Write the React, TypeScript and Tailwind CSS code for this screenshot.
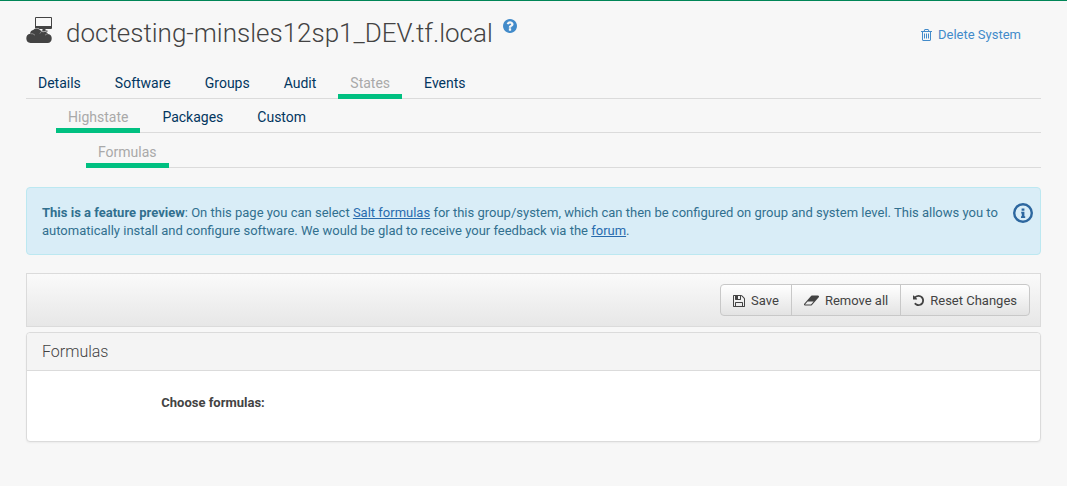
import type { ReactNode } from "react";

const FLOPPY =
  "M512 1536h768v-384h-768v384zm896 0h128v-896q0-14-10-38.5t-20-34.5l-281-281q-10-10-34-20t-39-10v416q0 40-28 68t-68 28h-576q-40 0-68-28t-28-68v-416h-128v1280h128v-416q0-40 28-68t68-28h832q40 0 68 28t28 68v416zm-384-928v-320q0-13-9.5-22.5t-22.5-9.5h-192q-13 0-22.5 9.5t-9.5 22.5v320q0 13 9.5 22.5t22.5 9.5h192q13 0 22.5-9.5t9.5-22.5zm640 32v928q0 40-28 68t-68 28h-1344q-40 0-68-28t-28-68v-1344q0-40 28-68t68-28h928q40 0 88 20t76 48l280 280q28 28 48 76t20 88z";
const ERASER =
  "M960 1408l336-384h-768l-336 384h768zm1013-1077q15 34 9.5 71.5t-30.5 65.5l-896 1024q-38 44-96 44h-768q-38 0-69.5-20.5t-47.5-54.5q-15-34-9.5-71.5t30.5-65.5l896-1024q38-44 96-44h768q38 0 69.5 20.5t47.5 54.5z";
const UNDO =
  "M1664 896q0 156-61 298t-164 245-245 164-298 61q-172 0-327-72.5t-264-204.5q-7-10-6.5-22.5t8.5-20.5l137-138q10-9 25-9 16 2 23 12 73 95 179 147t225 52q104 0 198.5-40.5t163.5-109.5 109.5-163.5 40.5-198.5-40.5-198.5-109.5-163.5-163.5-109.5-198.5-40.5q-98 0-188 35.5t-160 101.5l137 138q31 30 14 69-17 40-59 40h-448q-26 0-45-19t-19-45v-448q0-42 40-59 39-17 69 14l130 129q107-101 244.5-156.5t284.5-55.5q156 0 298 61t245 164 164 245 61 298z";
const TRASH =
  "M704 736v576q0 14-9 23t-23 9h-64q-14 0-23-9t-9-23v-576q0-14 9-23t23-9h64q14 0 23 9t9 23zm256 0v576q0 14-9 23t-23 9h-64q-14 0-23-9t-9-23v-576q0-14 9-23t23-9h64q14 0 23 9t9 23zm256 0v576q0 14-9 23t-23 9h-64q-14 0-23-9t-9-23v-576q0-14 9-23t23-9h64q14 0 23 9t9 23zm128 724v-948h-896v948q0 22 7 40.5t14.5 27 10.5 8.5h832q3 0 10.5-8.5t14.5-27 7-40.5zm-672-1076h448l-48-117q-7-9-17-11h-317q-10 2-17 11zm928 32v64q0 14-9 23t-23 9h-96v948q0 83-47 143.5t-113 60.5h-832q-66 0-113-58.5t-47-141.5v-952h-96q-14 0-23-9t-9-23v-64q0-14 9-23t23-9h309l70-167q15-37 54-63t79-26h320q40 0 79 26t54 63l70 167h309q14 0 23 9t9 23z";
const QUESTION =
  "M1024 1376v-192q0-14-9-23t-23-9h-192q-14 0-23 9t-9 23v192q0 14 9 23t23 9h192q14 0 23-9t9-23zm256-672q0-88-55.5-163t-138.5-116-170-41q-243 0-371 213-15 24 8 42l132 100q7 6 19 6 16 0 25-12 53-68 86-92 34-24 86-24 48 0 85.5 26t37.5 59q0 38-20 61t-68 45q-63 28-115.5 86.5t-52.5 125.5v36q0 14 9 23t23 9h192q14 0 23-9t9-23q0-19 21.5-49.5t54.5-49.5q32-18 49-28.5t46-35 44.5-48 28-60.5 12.5-81zm384 192q0 209-103 385.5t-279.5 279.5-385.5 103-385.5-103-279.5-279.5-103-385.5 103-385.5 279.5-279.5 385.5-103 385.5 103 279.5 279.5 103 385.5z";

function Glyph({ d, box = "0 0 1792 1792", className }: { d: string; box?: string; className: string }) {
  return (
    <svg viewBox={box} fill="currentColor" className={className} aria-hidden="true">
      <path d={d} />
    </svg>
  );
}

function SystemIcon() {
  return (
    <svg viewBox="0 0 26 26" className="size-[26px] shrink-0 text-[#434343]" fill="currentColor" aria-hidden="true">
      <path
        fillRule="evenodd"
        d="M10 0H25a1 1 0 0 1 1 1v10a1 1 0 0 1-1 1H19.500v1.500h2v1.200h-6v-1.200h1V12H10a1 1 0 0 1-1-1V1a1 1 0 0 1 1-1zM10 1v8h15V1z"
      />
      <path
        d="M4.500 26a4.700 4.700 0 0 1-.3-9.300A3.700 3.700 0 0 1 7.200 13a5.200 5.200 0 0 1 8.300 1.600 3 3 0 0 1 1.500.7 3.600 3.600 0 0 1 5 1.600A4.600 4.600 0 0 1 21.500 26z"
        stroke="#f7f7f7"
        strokeWidth="1"
        paintOrder="stroke"
      />
      <path
        d="M4.500 16.700q2.600-.5 4.500 1.500M15.500 14.700q-1.200.6-1.600 1.800M21.600 17q-1.700 0-2.600 1.300"
        fill="none"
        stroke="#a8a8a8"
        strokeWidth=".7"
      />
    </svg>
  );
}

function TabRow({ label, tabs, active, className }: { label: string; tabs: string[]; active: string; className: string }) {
  return (
    <nav aria-label={label} className={className}>
      <ul className="flex gap-[10px] border-b border-[#dbdbdb]">
        {tabs.map((tab) => (
          <li key={tab} className="-mb-px">
            <a
              href="#"
              aria-current={tab === active ? "page" : undefined}
              className={
                tab === active
                  ? "block border-b-[5px] border-[#00c081] px-3 pt-[5px] pb-[2px] text-[14px] leading-[18px] text-[#a9a9a9]"
                  : "block border-b-[5px] border-transparent px-3 pt-[5px] pb-[2px] text-[14px] leading-[18px] text-[#02365f]"
              }
            >
              {tab}
            </a>
          </li>
        ))}
      </ul>
    </nav>
  );
}

function BarButton({ children, className }: { children: ReactNode; className: string }) {
  return (
    <button
      type="button"
      className={
        "flex h-8 items-center gap-[6px] border border-[#c8c8c8] bg-linear-to-b from-white to-[#e3e3e3] px-3 pt-px text-[13px] text-[#434343] " +
        className
      }
    >
      {children}
    </button>
  );
}

export default function App() {
  return (
    <div className="min-h-screen border-t border-[#008657] bg-[#f7f7f7] px-[26px] pb-11 font-['Roboto',sans-serif] text-[13px] leading-[18px] text-[#434343]">
      <header className="flex items-start justify-between pt-4">
        <div className="flex items-start">
          <SystemIcon />
          <h1 className="ml-[14px] text-[26px] leading-8 font-light">doctesting-minsles12sp1_DEV.tf.local</h1>
          <a href="#" aria-label="Help" className="ml-[10px] pt-[2px] text-[#428bca]">
            <Glyph d={QUESTION} box="128 128 1536 1536" className="size-[14px]" />
          </a>
        </div>
        <a href="#" className="mt-[9px] mr-5 flex items-center gap-[6px] text-[#428bca]">
          <Glyph d={TRASH} box="192 128 1408 1536" className="h-3 w-[11px]" />
          Delete System
        </a>
      </header>

      <TabRow
        label="System"
        tabs={["Details", "Software", "Groups", "Audit", "States", "Events"]}
        active="States"
        className="mt-5"
      />
      <TabRow label="States" tabs={["Highstate", "Packages", "Custom"]} active="Highstate" className="mt-1 pl-[30px]" />
      <TabRow label="Highstate" tabs={["Formulas"]} active="Formulas" className="mt-[5px] pl-[60px]" />

      <section className="mt-[19px] flex items-start rounded border border-[#bce8f1] bg-[#d9edf7] pt-[15px] pr-[7px] pb-[14px] pl-[15px] text-[#31708f]">
        <p className="flex-1 pt-[1px]">
          <strong className="font-bold">This is a feature preview</strong>: On this page you can select{" "}
          <a href="#" className="text-[#286bae] underline">
            Salt formulas
          </a>{" "}
          for this group/system, which can then be configured on group and system level. This allows you to automatically
          install and configure software. We would be glad to receive your feedback via the{" "}
          <a href="#" className="text-[#286bae] underline">
            forum
          </a>
          .
        </p>
        <svg viewBox="0 0 20 20" className="ml-3 size-5 shrink-0 text-[#2d679f]" fill="currentColor" aria-hidden="true">
          <circle cx="10" cy="10" r="8.800" fill="none" stroke="currentColor" strokeWidth="2.400" />
          <path d="M8.600 5.600h2.800v2.200H8.600zM8.200 8.800h3.200v4.500h.8V15H8v-1.700h.8v-2.800h-.6z" />
        </svg>
      </section>

      <div className="mt-[18px] flex justify-end border border-[#dbdbdb] bg-linear-to-b from-[#fafafa] to-[#e7e7e7] p-[10px]">
        <div className="flex">
          <BarButton className="rounded-l">
            <Glyph d={FLOPPY} box="128 128 1536 1536" className="size-3" />
            Save
          </BarButton>
          <BarButton className="-ml-px">
            <Glyph d={ERASER} box="64 192 1920 1408" className="h-[11px] w-[15px]" />
            Remove all
          </BarButton>
          <BarButton className="-ml-px rounded-r">
            <Glyph d={UNDO} box="128 128 1536 1536" className="size-[11px]" />
            Reset Changes
          </BarButton>
        </div>
      </div>

      <section className="mt-[5px] rounded border border-[#dbdbdb] bg-white shadow-xs">
        <h2 className="rounded-t border-b border-[#dbdbdb] bg-[#f4f4f4] px-[15px] pt-[9px] pb-2 text-[16px] leading-5 font-light">
          Formulas
        </h2>
        <div className="grid grid-cols-4 px-[15px] pt-[23px] pb-[29px]">
          <span className="pr-[23px] text-right font-bold">Choose formulas:</span>
        </div>
      </section>
    </div>
  );
}
